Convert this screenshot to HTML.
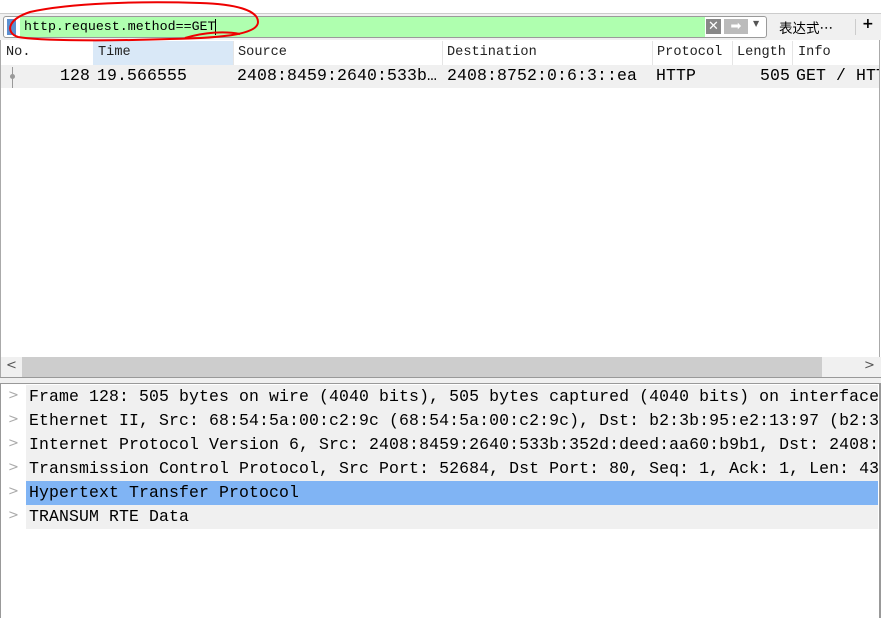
<!DOCTYPE html>
<html><head><meta charset="utf-8"><style>
*{margin:0;padding:0;box-sizing:border-box}
body{width:881px;height:618px;background:#fff;position:relative;overflow:hidden;font-family:"Liberation Mono",monospace;color:#000}
.a{position:absolute;white-space:pre}
.hd{font-size:13.6px;top:45px;color:#222}
.pk{font-size:16.5px;top:66px;letter-spacing:0.1px}
.dr{position:absolute;left:26px;width:852px;height:24px;background:#f0f0f0;font-size:16.5px;letter-spacing:0.1px;line-height:24px;padding-left:3px;white-space:pre;overflow:hidden}
.ch{position:absolute;left:8px;font-family:"DejaVu Sans";font-size:13px;color:#aaa}
</style></head><body>
<div class="a" style="left:0;top:13px;width:881px;height:27px;background:#f0f0f0;border-top:1px solid #ccc"></div>
<div class="a" style="left:3px;top:16px;width:764px;height:22px;border:1px solid #9a9a9a;border-radius:3px;background:#fff"></div>
<div class="a" style="left:7px;top:19px;width:9px;height:16px;background:#5b8fd0"></div>
<div class="a" style="left:20px;top:17px;width:685px;height:20px;background:#afffaf"></div>
<div class="a" style="left:24px;top:18px;font-size:13.3px;line-height:18px">http.request.method==GET</div>
<div class="a" style="left:215px;top:19px;width:1px;height:16px;background:#000"></div>
<div class="a" style="left:706px;top:19px;width:15px;height:15px;background:#888;color:#fff;font-family:'DejaVu Sans';font-size:13px;line-height:15px;text-align:center">✕</div>
<div class="a" style="left:724px;top:19px;width:24px;height:15px;background:#bbb;color:#fff;font-family:'DejaVu Sans';font-size:13px;line-height:15px;text-align:center">➡</div>
<div class="a" style="left:753px;top:19px;font-family:'DejaVu Sans';font-size:8px;color:#555">▼</div>
<div class="a" style="left:779px;top:17px;font-family:'Noto Sans CJK SC',sans-serif;font-size:13.5px">表达式…</div>
<div class="a" style="left:855px;top:19px;width:1px;height:16px;background:#ccc"></div>
<div class="a" style="left:862px;top:16px;font-family:'DejaVu Sans';font-size:14px;font-weight:bold">+</div>
<div class="a" style="left:0;top:40px;width:1px;height:338px;background:#aaa"></div>
<div class="a" style="left:879px;top:40px;width:1px;height:340px;background:#aaa"></div>
<div class="a" style="left:93px;top:41px;width:140px;height:24px;background:#d9e8f7"></div>
<div class="a" style="left:233px;top:41px;width:1px;height:24px;background:#e5e5e5"></div>
<div class="a" style="left:442px;top:41px;width:1px;height:24px;background:#e5e5e5"></div>
<div class="a" style="left:652px;top:41px;width:1px;height:24px;background:#e5e5e5"></div>
<div class="a" style="left:732px;top:41px;width:1px;height:24px;background:#e5e5e5"></div>
<div class="a" style="left:792px;top:41px;width:1px;height:24px;background:#e5e5e5"></div>
<div class="a hd" style="left:6px">No.</div>
<div class="a hd" style="left:98px">Time</div>
<div class="a hd" style="left:238px">Source</div>
<div class="a hd" style="left:447px">Destination</div>
<div class="a hd" style="left:657px">Protocol</div>
<div class="a hd" style="left:737px">Length</div>
<div class="a hd" style="left:798px">Info</div>
<div class="a" style="left:1px;top:65px;width:878px;height:23px;background:#f0f0f0"></div>
<div class="a" style="left:12px;top:67px;width:1px;height:21px;background:#999"></div>
<div class="a" style="left:10px;top:74px;width:5px;height:5px;border-radius:50%;background:#999"></div>
<div class="a pk" style="left:60px">128</div>
<div class="a pk" style="left:97px">19.566555</div>
<div class="a pk" style="left:237px">2408:8459:2640:533b…</div>
<div class="a pk" style="left:447px">2408:8752:0:6:3::ea</div>
<div class="a pk" style="left:656px">HTTP</div>
<div class="a pk" style="left:760px">505</div>
<div class="a pk" style="left:796px;width:83px;overflow:hidden">GET / HTTP</div>
<div class="a" style="left:0;top:357px;width:881px;height:20px;background:#f0f0f0;border-left:1px solid #aaa"></div>
<div class="a" style="left:22px;top:357px;width:800px;height:20px;background:#cdcdcd"></div>
<div class="a" style="left:6px;top:358px;font-family:'DejaVu Sans';font-size:13px;color:#555">&lt;</div>
<div class="a" style="left:864px;top:358px;font-family:'DejaVu Sans';font-size:13px;color:#555">&gt;</div>
<div class="a" style="left:0;top:377px;width:881px;height:1px;background:#999"></div>
<div class="a" style="left:0;top:378px;width:881px;height:5px;background:#f0f0f0"></div>
<div class="a" style="left:0;top:383px;width:881px;height:1px;background:#999"></div>
<div class="a" style="left:0;top:383px;width:1px;height:235px;background:#999"></div>
<div class="a" style="left:879px;top:383px;width:2px;height:235px;background:#999"></div>
<div class="dr" style="top:385px">Frame 128: 505 bytes on wire (4040 bits), 505 bytes captured (4040 bits) on interface</div>
<div class="dr" style="top:409px">Ethernet II, Src: 68:54:5a:00:c2:9c (68:54:5a:00:c2:9c), Dst: b2:3b:95:e2:13:97 (b2:3b:95:e2:13:97)</div>
<div class="dr" style="top:433px">Internet Protocol Version 6, Src: 2408:8459:2640:533b:352d:deed:aa60:b9b1, Dst: 2408:8752</div>
<div class="dr" style="top:457px">Transmission Control Protocol, Src Port: 52684, Dst Port: 80, Seq: 1, Ack: 1, Len: 431</div>
<div class="dr" style="top:481px;background:#80b4f4">Hypertext Transfer Protocol</div>
<div class="dr" style="top:505px">TRANSUM RTE Data</div>
<div class="ch" style="top:388px">&gt;</div>
<div class="ch" style="top:412px">&gt;</div>
<div class="ch" style="top:436px">&gt;</div>
<div class="ch" style="top:460px">&gt;</div>
<div class="ch" style="top:484px">&gt;</div>
<div class="ch" style="top:508px">&gt;</div>
<svg class="a" style="left:0;top:0" width="881" height="60">
<path d="M30 12 C70 3 140 1 200 3 C235 4 258 10 258 22 C258 33 230 38 170 39 C110 41 40 41 18 37 C6 33 6 20 30 12 Z" fill="none" stroke="#e00" stroke-width="2"/>
<path d="M185 38 C205 32 225 31 240 34" fill="none" stroke="#e00" stroke-width="2"/>
</svg>
</body></html>
